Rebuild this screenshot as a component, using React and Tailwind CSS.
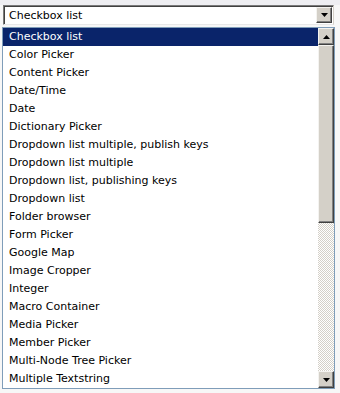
import React from "react";

const items = [
  "Checkbox list",
  "Color Picker",
  "Content Picker",
  "Date/Time",
  "Date",
  "Dictionary Picker",
  "Dropdown list multiple, publish keys",
  "Dropdown list multiple",
  "Dropdown list, publishing keys",
  "Dropdown list",
  "Folder browser",
  "Form Picker",
  "Google Map",
  "Image Cropper",
  "Integer",
  "Macro Container",
  "Media Picker",
  "Member Picker",
  "Multi-Node Tree Picker",
  "Multiple Textstring",
];

function Arrow({ up }) {
  return (
    <svg width="7" height="4" viewBox="0 0 7 4">
      {up ? <polygon points="3.5,0 7,4 0,4" fill="#000" /> : <polygon points="0,0 7,0 3.5,4" fill="#000" />}
    </svg>
  );
}

function Btn({ up, className = "" }) {
  return (
    <div className={"flex items-center justify-center bg-[#d4d0c8] border border-t-[#f4f3f0] border-l-[#f4f3f0] border-r-[#404040] border-b-[#404040] shadow-[inset_-1px_-1px_0_#808080] " + className}>
      <Arrow up={up} />
    </div>
  );
}

export default function App() {
  return (
    <div className="w-[340px] h-[393px] overflow-hidden bg-[#f7f7f7] relative font-['DejaVu_Sans',sans-serif] text-[11px] text-black">
      <div className="h-[5px] bg-[#eeeef2]" />
      <div className="ml-[3px] w-[331px] h-[20px] bg-white border border-t-[#7a7a7a] border-l-[#7a7a7a] border-r-[#d4d0c8] border-b-[#e8e8e8] shadow-[inset_1px_1px_0_#404040] flex items-center">
        <span className="pl-[5px] flex-1 leading-none">Checkbox list</span>
        <Btn className="w-[16px] h-[16px] mr-px" />
      </div>
      <div className="absolute left-[2px] top-[27px] w-[333px] h-[362px] border border-[#7f9db9] bg-white flex">
        <div className="flex-1 flex flex-col">
          {items.map((t, i) => (
            <div
              key={t}
              className={
                "h-[18px] shrink-0 flex items-center pl-[6px] whitespace-nowrap " +
                (i === 0 ? "bg-[#0a246a] text-white" : "")
              }
            >
              {t}
            </div>
          ))}
        </div>
        <div className="w-[16px] flex flex-col">
          <Btn up className="h-[17px]" />
          <div className="h-[178px] bg-[#d4d0c8] border border-t-[#f4f3f0] border-l-[#f4f3f0] border-r-[#404040] border-b-[#404040] shadow-[inset_-1px_-1px_0_#808080]" />
          <div className="flex-1 bg-[repeating-conic-gradient(#d4d0c8_0_25%,#ffffff_0_50%)] bg-[length:2px_2px]" />
          <Btn className="h-[17px]" />
        </div>
      </div>
    </div>
  );
}
